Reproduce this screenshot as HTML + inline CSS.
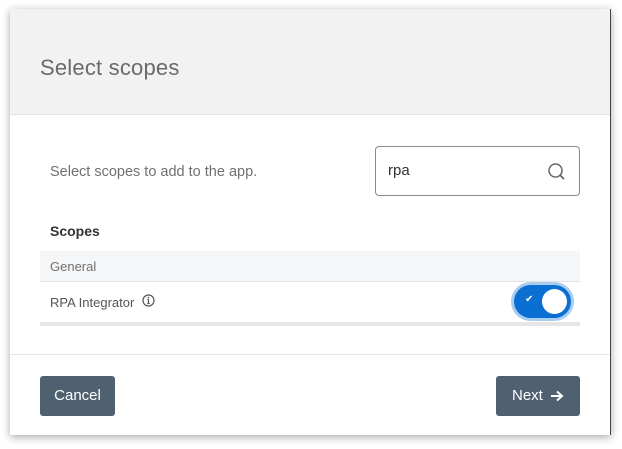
<!DOCTYPE html>
<html><head><meta charset="utf-8"><style>
*{box-sizing:border-box;margin:0;padding:0}
body{width:622px;height:449px;background:#fff;font-family:"Liberation Sans",sans-serif;position:relative;overflow:hidden}
.dlg{position:absolute;left:10px;top:9px;width:601px;height:426px;background:#fff;box-shadow:0 2px 8px rgba(0,0,0,.35);border-right:1px solid #444}
.hdr{position:absolute;left:0;top:0;width:100%;height:106px;background:#f2f2f2;border-bottom:1px solid #e2e2e2}
.hdr h1{position:absolute;left:30px;top:46px;font-weight:normal;font-size:22px;color:#6a6a6a;letter-spacing:.2px}
.t{position:absolute;font-size:14px;color:#707070}
.search{position:absolute;left:365px;top:137px;width:205px;height:50px;border:1px solid #8a8a8a;border-radius:4px}
.search span{position:absolute;left:12px;top:15px;font-size:15px;color:#333}
.grp{position:absolute;left:30px;top:242px;width:540px;height:31px;background:#f5f6f7;border-bottom:1px solid #e3e3e3}
.row{position:absolute;left:30px;top:273px;width:540px;height:44px;border-bottom:4px solid #e6e6e6}
.tog{position:absolute;left:474px;top:3px;width:57px;height:33px;border-radius:17px;background:#0a6fd0;box-shadow:0 0 0 3px #a8cdf0}
.tog .k{position:absolute;right:4px;top:4px;width:25px;height:25px;border-radius:50%;background:#fff}
.tog .c{position:absolute;left:11px;top:9px;color:#fff;font-size:10px}
.ftr{position:absolute;left:0;top:345px;width:100%;border-top:1px solid #e6e6e6}
.btn{position:absolute;top:367px;height:40px;background:#4f6170;border-radius:3px;color:#fff;font-size:15px;text-align:center;line-height:40px}
</style></head><body>
<div class="dlg">
<div class="hdr"><h1>Select scopes</h1></div>
<div class="t" style="left:40px;top:155px;font-size:14.5px">Select scopes to add to the app.</div>
<div class="search"><span>rpa</span>
<svg style="position:absolute;right:12px;top:15px" width="20" height="20" viewBox="0 0 20 20"><circle cx="8.5" cy="8.5" r="6.5" fill="none" stroke="#666" stroke-width="1.5"/><path d="M13 13l4 4" stroke="#666" stroke-width="1.8"/></svg></div>
<div class="t" style="left:40px;top:214px;font-weight:bold;color:#333">Scopes</div>
<div class="grp"><span class="t" style="left:10px;top:8px;font-size:13px">General</span></div>
<div class="row"><span class="t" style="left:10px;top:13px;font-size:13px;color:#555">RPA Integrator</span>
<svg style="position:absolute;left:102px;top:12px" width="13" height="13" viewBox="0 0 13 13"><circle cx="6.5" cy="6.5" r="5.5" fill="none" stroke="#555" stroke-width="1.2"/><path d="M6.5 5.5v4M5.3 9.5h2.4M5.3 5.5h1.2" stroke="#555" stroke-width="1.2"/><circle cx="6.5" cy="3.6" r=".8" fill="#555"/></svg>
<div class="tog"><span class="c">✔</span><div class="k"></div></div></div>
<div class="ftr"></div>
<div class="btn" style="left:30px;width:75px">Cancel</div>
<div class="btn" style="left:486px;width:84px">Next <svg style="vertical-align:-2px;margin-left:3px" width="14" height="12" viewBox="0 0 14 12"><path d="M1 6h11M7 1.5L12 6 7 10.5" fill="none" stroke="#fff" stroke-width="2"/></svg></div>
</div>
</body></html>
